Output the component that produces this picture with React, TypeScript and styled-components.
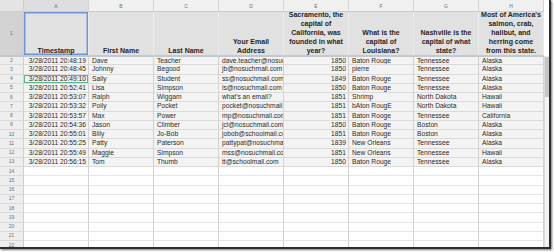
import { Fragment } from 'react';
import styled, { createGlobalStyle } from 'styled-components';

type Response = {
  time: string;
  first: string;
  last: string;
  email: string;
  year: number;
  louisiana: string;
  nashville: string;
  fish: string;
};

const COLUMNS = ['A', 'B', 'C', 'D', 'E', 'F', 'G', 'H'];

const HEADERS: string[][] = [
  ['Timestamp'],
  ['First Name'],
  ['Last Name'],
  ['Your Email', 'Address'],
  ['Sacramento, the', 'capital of', 'California, was', 'founded in what', 'year?'],
  ['What is the', 'capital of', 'Louisiana?'],
  ['Nashville is the', 'capital of what', 'state?'],
  ["Most of America's", 'salmon, crab,', 'halibut, and', 'herring come', 'from this state.'],
];

const responses: Response[] = [
  { time: '3/28/2011 20:48:19', first: 'Dave', last: 'Teacher', email: 'dave.teacher@nosuchmail.com', year: 1850, louisiana: 'Baton Rouge', nashville: 'Tennessee', fish: 'Alaska' },
  { time: '3/28/2011 20:48:45', first: 'Johnny', last: 'Begood', email: 'jb@nosuchmail.com', year: 1850, louisiana: 'pierre', nashville: 'Tennessee', fish: 'Alaska' },
  { time: '3/28/2011 20:49:10', first: 'Sally', last: 'Student', email: 'ss@nosuchmail.com', year: 1849, louisiana: 'Baton Rouge', nashville: 'Tennessee', fish: 'Alaska' },
  { time: '3/28/2011 20:52:41', first: 'Lisa', last: 'Simpson', email: 'ls@nosuchmail.com', year: 1850, louisiana: 'Baton Rouge', nashville: 'Tennessee', fish: 'Alaska' },
  { time: '3/28/2011 20:53:07', first: 'Ralph', last: 'Wiggam', email: "what's an email?", year: 1851, louisiana: 'Shrimp', nashville: 'North Dakota', fish: 'Hawaii' },
  { time: '3/28/2011 20:53:32', first: 'Polly', last: 'Pocket', email: 'pocket@nosuchmail.com', year: 1851, louisiana: 'bAton RougE', nashville: 'North Dakota', fish: 'Hawaii' },
  { time: '3/28/2011 20:53:57', first: 'Max', last: 'Power', email: 'mp@nosuchmail.com', year: 1851, louisiana: 'Baton Rooge', nashville: 'Tennessee', fish: 'California' },
  { time: '3/28/2011 20:54:36', first: 'Jason', last: 'Climber', email: 'jcl@nosuchmail.com', year: 1850, louisiana: 'Baton Rouge', nashville: 'Boston', fish: 'Alaska' },
  { time: '3/28/2011 20:55:01', first: 'Billy', last: 'Jo-Bob', email: 'jobob@schoolmail.com', year: 1851, louisiana: 'Baton Rouge', nashville: 'Boston', fish: 'Alaska' },
  { time: '3/28/2011 20:55:25', first: 'Patty', last: 'Paterson', email: 'pattypat@nosuchmail.com', year: 1839, louisiana: 'New Orleans', nashville: 'Tennessee', fish: 'Alaska' },
  { time: '3/28/2011 20:55:49', first: 'Maggie', last: 'Simpson', email: 'mss@nosuchmail.com', year: 1851, louisiana: 'New Orleans', nashville: 'Tennessee', fish: 'Hawaii' },
  { time: '3/28/2011 20:56:15', first: 'Tom', last: 'Thumb', email: 'tt@schoolmail.com', year: 1850, louisiana: 'Baton Rouge', nashville: 'Tennessee', fish: 'Alaska' },
];

const EMPTY_ROWS = [14, 15, 16, 17, 18, 19, 20, 21, 22];

export default function App() {
  return (
    <>
      <GlobalStyle />
      <Page>
        <Window>
          <Sheet>
            <Corner />
            {COLUMNS.map((col, i) => (
              <ColumnLabel key={col} $active={i === 0}>
                {col}
              </ColumnLabel>
            ))}

            <RowLabel $active $tall>
              1
            </RowLabel>
            {HEADERS.map((lines, i) => (
              <HeaderCell key={i} $selected={i === 0}>
                <HeaderText>
                  {lines.map((line, j) => (
                    <Fragment key={j}>
                      {j > 0 && <br />}
                      {line}
                    </Fragment>
                  ))}
                </HeaderText>
              </HeaderCell>
            ))}

            {responses.map((r, i) => (
              <Fragment key={r.time}>
                <RowLabel $first={i === 0}>{i + 2}</RowLabel>
                <Cell $filled $first={i === 0} $align="right" $collab={i === 2}>
                  {r.time}
                </Cell>
                <Cell $filled $first={i === 0}>{r.first}</Cell>
                <Cell $filled $first={i === 0}>{r.last}</Cell>
                <Cell $filled $first={i === 0}>{r.email}</Cell>
                <Cell $filled $first={i === 0} $align="right">
                  {r.year}
                </Cell>
                <Cell $filled $first={i === 0}>{r.louisiana}</Cell>
                <Cell $filled $first={i === 0}>{r.nashville}</Cell>
                <Cell $filled $first={i === 0}>{r.fish}</Cell>
              </Fragment>
            ))}

            {EMPTY_ROWS.map((n) => (
              <Fragment key={n}>
                <RowLabel>{n}</RowLabel>
                {COLUMNS.map((col) => (
                  <Cell key={col} />
                ))}
              </Fragment>
            ))}
          </Sheet>

          <Scrollbar>
            <ScrollTrack>
              <ScrollThumb />
            </ScrollTrack>
          </Scrollbar>
        </Window>
      </Page>
    </>
  );
}

const GlobalStyle = createGlobalStyle`
  html, body {
    margin: 0;
    padding: 0;
    background: #ffffff;
  }
  body {
    font-family: "Liberation Sans", Arial, sans-serif;
  }
`;

const Page = styled.div`
  width: 554px;
  height: 252px;
  overflow: hidden;
  background: #ffffff;
`;

const Window = styled.div`
  display: flex;
  width: 549px;
  height: 247px;
  border-right: 2px solid #2e2e2e;
  border-bottom: 2px solid #2e2e2e;
  box-shadow: 1px 1px 2px rgba(0, 0, 0, 0.55);
  overflow: hidden;
  background: #ffffff;
`;

const Sheet = styled.div`
  display: grid;
  grid-template-columns: 24px repeat(8, 65px);
  grid-template-rows: 12px 44px repeat(21, 9.25px);
  width: 544px;
  height: 247px;
  overflow: hidden;
  flex: none;
`;

const Corner = styled.div`
  background: #e4e4e4;
  border-right: 1px solid #cdcdcd;
  border-bottom: 1px solid #cdcdcd;
`;

const ColumnLabel = styled.div<{ $active?: boolean }>`
  display: flex;
  align-items: center;
  justify-content: center;
  background: ${(p) => (p.$active ? '#dedede' : '#f0f0f0')};
  border-right: 1px solid #d4d4d4;
  border-bottom: 1px solid #cdcdcd;
  color: #707070;
  font-size: 5px;
`;

const RowLabel = styled.div<{ $active?: boolean; $tall?: boolean; $first?: boolean }>`
  display: flex;
  align-items: center;
  justify-content: center;
  box-sizing: border-box;
  background: ${(p) => (p.$active ? '#d2d2d2' : '#eeeeee')};
  border-right: 1px solid #cdcdcd;
  border-bottom: 1px solid ${(p) => (p.$tall ? '#c3c8d0' : '#dadada')};
  border-top: ${(p) => (p.$first ? '1px solid #c3c8d0' : '0')};
  color: #6e6e6e;
  font-size: 5px;
  line-height: 1;
  overflow: hidden;
`;

const HeaderCell = styled.div<{ $selected?: boolean }>`
  display: flex;
  align-items: flex-end;
  justify-content: center;
  box-sizing: border-box;
  background: #e1e1e1;
  border-right: 1px solid #eaeaea;
  border-bottom: 1px solid #c3c8d0;
  box-shadow: ${(p) => (p.$selected ? 'inset 0 0 0 1.5px #6f95d6' : 'none')};
  overflow: hidden;
`;

const HeaderText = styled.div`
  color: #262626;
  font-size: 7px;
  font-weight: 700;
  line-height: 9px;
  text-align: center;
  padding-bottom: 0.5px;
  white-space: nowrap;
`;

const Cell = styled.div<{
  $filled?: boolean;
  $align?: 'left' | 'right';
  $collab?: boolean;
  $first?: boolean;
}>`
  box-sizing: border-box;
  padding: 0 2px 0 3px;
  background: ${(p) => (p.$filled ? '#f3f3f3' : '#ffffff')};
  border-right: 1px solid #d2d2d2;
  border-bottom: 1px solid ${(p) => (p.$filled ? '#dadada' : '#e6e6e6')};
  border-top: ${(p) => (p.$first ? '1px solid #c3c8d0' : '0')};
  box-shadow: ${(p) => (p.$collab ? 'inset 0 0 0 1px #57b98b' : 'none')};
  color: #2a2a2a;
  font-size: 6.7px;
  line-height: 8.25px;
  text-align: ${(p) => p.$align ?? 'left'};
  white-space: nowrap;
  overflow: hidden;
`;

const Scrollbar = styled.div`
  display: flex;
  flex-direction: column;
  width: 5px;
  padding-top: 56px;
  background: #ffffff;
`;

const ScrollTrack = styled.div`
  flex: 1;
  padding-top: 1px;
  background: #f3f3f3;
  border-left: 1px solid #dcdcdc;
`;

const ScrollThumb = styled.div`
  width: 4px;
  height: 40px;
  background: #c6c6c6;
`;
